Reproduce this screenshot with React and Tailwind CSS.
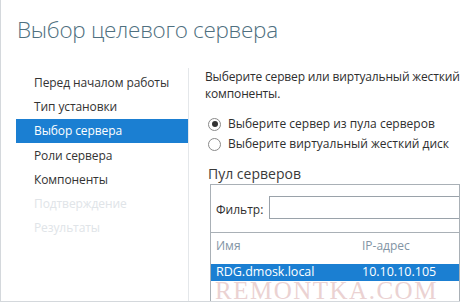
export default function App() {
  const nav = [
    { t: "Перед началом работы", s: "n" },
    { t: "Тип установки", s: "n" },
    { t: "Выбор сервера", s: "a" },
    { t: "Роли сервера", s: "n" },
    { t: "Компоненты", s: "n" },
    { t: "Подтверждение", s: "d" },
    { t: "Результаты", s: "d" },
  ];
  return (
    <div
      className="relative w-[460px] h-[302px] overflow-hidden bg-white border-l border-b border-[#d4d8dc] flex flex-col text-[#2b2b2b]"
      style={{ fontFamily: '"Open Sans", "Noto Sans", sans-serif' }}
    >
      <div className="h-[68px] shrink-0 pl-[16px] pt-[14px]">
        <div className="text-[22.5px] leading-[32px] font-light text-[#4f7080] whitespace-nowrap tracking-[-0.3px]">
          Выбор целевого сервера
        </div>
      </div>
      <div className="flex flex-1 min-h-0">
        <div className="w-[188px] shrink-0 border-r border-[#e4e7ea] pt-[3px] pl-[15px]">
          {nav.map((n) => (
            <div
              key={n.t}
              className={
                "h-[24px] flex items-center pl-[18px] text-[12px] whitespace-nowrap tracking-[-0.1px] " +
                (n.s === "a"
                  ? "bg-[#1b7fd2] text-white h-[23px] mb-[1px]"
                  : n.s === "d"
                  ? "text-[#e0e4e8]"
                  : "text-[#333]")
              }
            >
              {n.t}
            </div>
          ))}
        </div>
        <div className="flex-1 min-w-0 pl-[16px] flex flex-col">
          <div className="text-[12px] leading-[17px] whitespace-nowrap text-[#2e2e2e] tracking-[-0.15px]">
            <div>Выберите сервер или виртуальный жесткий диск, на котором будут установлены роли и</div>
            <div>компоненты.</div>
          </div>
          <div className="mt-[12px] flex flex-col text-[12px] text-[#2e2e2e]">
            <div className="h-[20px] flex items-center whitespace-nowrap">
              <span className="w-[13px] h-[13px] rounded-full border border-[#8a8a8a] flex items-center justify-center mr-[7px] ml-[3px] shrink-0">
                <span className="w-[6px] h-[6px] rounded-full bg-[#333]" />
              </span>
              Выберите сервер из пула серверов
            </div>
            <div className="h-[20px] flex items-center whitespace-nowrap">
              <span className="w-[13px] h-[13px] rounded-full border border-[#8a8a8a] mr-[7px] ml-[3px] shrink-0" />
              Выберите виртуальный жесткий диск
            </div>
          </div>
          <div className="mt-[11px] ml-[3px] text-[14px] leading-[18px] text-[#3a3a3a] whitespace-nowrap">
            Пул серверов
          </div>
          <div className="ml-[5px] mt-[1px] flex-1 border-l border-t border-r border-[#a9b0b6] flex flex-col">
            <div className="h-[48px] shrink-0 flex items-center pl-[5px] border-b border-[#a9b0b6]">
              <span className="text-[12px] text-[#2e2e2e] mt-[3px] whitespace-nowrap">Фильтр:</span>
              <div className="ml-[6px] flex-1 h-[23px] border border-[#9aa2aa] border-r-0 -mt-[3px]" />
            </div>
            <div className="h-[31px] shrink-0 pt-[4px] flex text-[12px] leading-[17px] text-[#8294a4] pl-[5px]">
              <div className="w-[146px]">Имя</div>
              <div>IP-адрес</div>
            </div>
            <div className="h-[17px] shrink-0 flex items-center bg-[#1b7fd2] text-white text-[12.5px] pl-[5px] whitespace-nowrap">
              <div className="w-[146px]">RDG.dmosk.local</div>
              <div>10.10.10.105</div>
            </div>
          </div>
        </div>
      </div>
      <div
        className="absolute left-[214px] top-[279px] text-[25px] leading-[24px] text-[#ebd2d2] tracking-[1.5px] whitespace-nowrap"
        style={{ fontFamily: '"Liberation Serif", serif' }}
      >
        REMONTKA.COM
      </div>
    </div>
  );
}
